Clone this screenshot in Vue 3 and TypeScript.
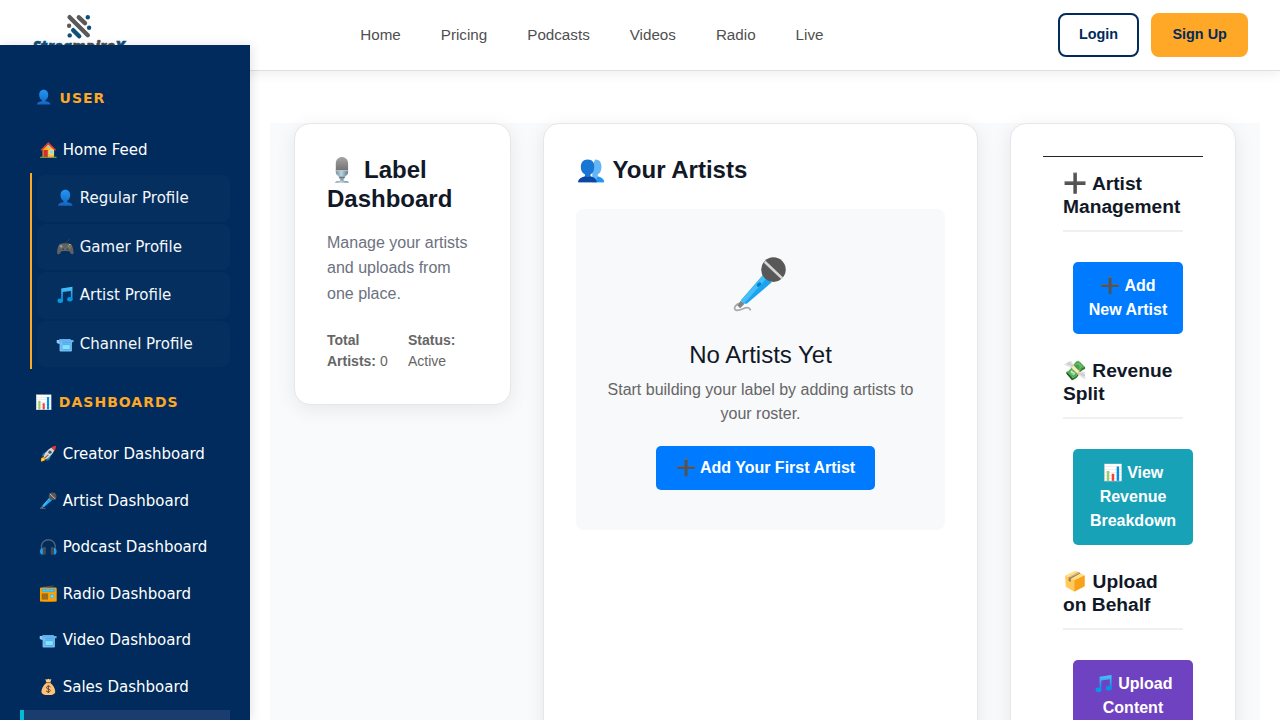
<script setup lang="ts">
interface Entry {
  icon: string
  text: string
}
interface Action {
  titleIcon: string
  title: string
  icon: string
  label: string
  kind: string
}

const nav: string[] = ['Home', 'Pricing', 'Podcasts', 'Videos', 'Radio', 'Live']
const profiles: Entry[] = [
  { icon: 'bust', text: 'Regular Profile' },
  { icon: 'game', text: 'Gamer Profile' },
  { icon: 'note', text: 'Artist Profile' },
  { icon: 'video', text: 'Channel Profile' },
]
const dashboards: Entry[] = [
  { icon: 'rocket', text: 'Creator Dashboard' },
  { icon: 'mic', text: 'Artist Dashboard' },
  { icon: 'phones', text: 'Podcast Dashboard' },
  { icon: 'radio', text: 'Radio Dashboard' },
  { icon: 'video', text: 'Video Dashboard' },
  { icon: 'bag', text: 'Sales Dashboard' },
]
const actions: Action[] = [
  { titleIcon: 'plus', title: 'Artist Management', icon: 'plus', label: 'Add New Artist', kind: 'primary' },
  { titleIcon: '', title: '💸 Revenue Split', icon: '', label: '📊 View Revenue Breakdown', kind: 'info' },
  { titleIcon: 'box', title: 'Upload on Behalf', icon: 'note', label: 'Upload Content', kind: 'purple' },
]
</script>

<template>
  <div class="page">
    <svg class="defs" width="0" height="0" aria-hidden="true">
      <defs>
        <linearGradient id="g-blue" x1="0" y1="0" x2="0" y2="1">
          <stop offset="0" stop-color="#4fc3f7" />
          <stop offset="1" stop-color="#0288e8" />
        </linearGradient>
        <linearGradient id="g-bust" x1="0" y1="0" x2="0" y2="1">
          <stop offset="0" stop-color="#2196f3" />
          <stop offset="1" stop-color="#1565c0" />
        </linearGradient>
        <linearGradient id="g-grey" x1="0" y1="0" x2="0" y2="1">
          <stop offset="0" stop-color="#a6a6a6" />
          <stop offset="1" stop-color="#707070" />
        </linearGradient>
        <linearGradient id="g-steel" x1="0" y1="0" x2="1" y2="0">
          <stop offset="0" stop-color="#78909c" />
          <stop offset="0.45" stop-color="#b9d3df" />
          <stop offset="1" stop-color="#607d8b" />
        </linearGradient>
      </defs>
      <symbol id="i-bust" viewBox="0 0 128 128">
        <path d="M64 6 C88 6 100 24 99 48 C98 68 88 82 78 86 V96 C96 99 114 102 117 122 H11 C14 102 32 99 50 96 V86 C40 82 30 68 29 48 C28 24 40 6 64 6Z" fill="url(#g-bust)" />
      </symbol>
      <symbol id="i-group" viewBox="0 0 128 128">
        <path d="M84 16 C104 16 112 30 112 50 C112 68 104 80 95 84 V94 C110 98 122 102 124 120 H70 V40Z" fill="#64b5f6" />
        <path d="M95 94 C110 98 122 102 124 120 H84Z" fill="#2196f3" />
        <path d="M49 16 C72 16 80 32 79 52 C78 70 70 80 62 84 V94 C78 98 88 102 90 120 H6 C8 102 22 98 37 94 V84 C28 80 18 70 18 50 C18 30 28 16 49 16Z" fill="#1976d2" />
        <path d="M37 92 Q49 99 62 94 C78 98 88 102 90 120 H6 C8 102 22 98 37 94Z" fill="#0d47a1" />
      </symbol>
      <symbol id="i-plus" viewBox="0 0 128 128">
        <path d="M55 4 H75 V54 H124 V74 H75 V124 H55 V74 H5 V54 H55Z" fill="#535353" />
        <path d="M55 4 H75 V10 H55Z M5 54 H55 V58 H5Z M75 54 H124 V58 H75Z" fill="#7a7a7a" />
      </symbol>
      <symbol id="i-box" viewBox="0 0 128 128">
        <path d="M8 32 L68 4 L120 30 L60 60Z" fill="#ffe082" />
        <path d="M8 32 L60 58 V124 L12 96Z" fill="#ffca55" />
        <path d="M60 58 L120 30 V92 L60 124Z" fill="#f9a11b" />
        <path d="M28 42 L84 12 L96 18 L40 50 V68 L28 62Z" fill="#a1795c" />
        <path d="M32 42 L88 15" stroke="#ffe9a8" stroke-width="4" />
      </symbol>
      <symbol id="i-home" viewBox="0 0 128 128">
        <path d="M22 62 L64 22 L106 62 V118 H22Z" fill="#fbc02d" />
        <path d="M12 66 L40 34 L60 52 L48 66Z" fill="#ffb300" />
        <path d="M6 66 L64 8 L122 66 L112 72 L64 26 L18 72Z" fill="#e53935" />
        <path d="M28 66 H60 V118 H28Z" fill="#d32f2f" />
        <path d="M74 66 H100 V96 H74Z" fill="#81d4fa" stroke="#fff3c4" stroke-width="4" />
        <circle cx="64" cy="42" r="10" fill="#81d4fa" />
        <path d="M4 114 H60 V124 H4Z M96 114 H124 V124 H96Z" fill="#689f38" />
        <path d="M60 114 H96 V124 H60Z" fill="#a1887f" />
      </symbol>
      <symbol id="i-game" viewBox="0 0 128 128">
        <path d="M64 42 C64 22 84 32 96 6" fill="none" stroke="#4a4a4a" stroke-width="5" />
        <path d="M24 44 C38 36 90 36 104 44 C116 52 126 92 124 108 C122 124 108 122 100 108 L90 94 H38 L28 108 C20 122 6 124 4 108 C2 92 12 52 24 44Z" fill="#616161" />
        <path d="M22 60 H44 M33 50 V71" stroke="#aaa" stroke-width="7" />
        <circle cx="48" cy="82" r="11" fill="#454545" stroke="#909090" stroke-width="3" />
        <circle cx="80" cy="82" r="11" fill="#454545" stroke="#909090" stroke-width="3" />
        <circle cx="96" cy="49" r="6" fill="#ffca28" />
        <circle cx="85" cy="60" r="6" fill="#29b6f6" />
        <circle cx="108" cy="61" r="6" fill="#f44336" />
        <circle cx="97" cy="72" r="6" fill="#4caf50" />
      </symbol>
      <symbol id="i-note" viewBox="0 0 128 128">
        <path d="M34 18 L116 6 V98 H104 V36 L46 44 V108 H34Z" fill="url(#g-blue)" />
        <ellipse cx="27" cy="108" rx="20" ry="16" fill="#039be5" />
        <ellipse cx="97" cy="97" rx="20" ry="16" fill="#0394e3" />
      </symbol>
      <symbol id="i-video" viewBox="0 0 128 128">
        <path d="M2 36 H20 V30 H104 V36 H124 V52 H108 V66 H20 L2 58Z" fill="#5eaeea" />
        <path d="M2 36 H20 V62 L2 58Z" fill="#90caf9" />
        <path d="M22 50 L42 42 H112 V114 Q112 120 106 120 H28 Q22 120 22 114Z" fill="#74bdf5" />
        <path d="M42 48 H106 V62 H42Z" fill="#5ba9e8" />
        <rect x="40" y="70" width="60" height="36" rx="8" fill="#81e4ff" stroke="#429ee4" stroke-width="5" />
      </symbol>
      <symbol id="i-rocket" viewBox="0 0 128 128">
        <path d="M34 84 L10 96 L10 122 L36 114 L48 96Z" fill="#ff9800" />
        <path d="M22 94 L12 118 L36 106Z" fill="#ffeb3b" />
        <path d="M52 48 L26 62 L16 84 L44 76Z M82 80 L72 106 L48 116 L54 86Z" fill="#1687a5" />
        <path d="M30 88 C36 52 70 18 112 12 C112 50 78 88 44 104Z" fill="#cfd8dc" />
        <path d="M84 20 Q100 8 120 6 Q120 26 110 44Z" fill="#e53935" />
        <circle cx="76" cy="52" r="12" fill="#455a64" />
        <path d="M36 96 L64 72" stroke="#d84315" stroke-width="8" />
      </symbol>
      <symbol id="i-mic" viewBox="0 0 128 128">
        <path d="M16 108 C2 116 4 127 18 123 C30 119 38 113 43 124" fill="none" stroke="#aaa" stroke-width="4" />
        <path d="M20 102 L29 109 L19 119 L13 113Z" fill="#828282" />
        <path d="M72 42 L91 60 L34 109 Q25 110 21 101Z" fill="#18a4f2" />
        <path d="M72 42 L80 50 L28 108 Q22 105 21 101Z" fill="#45bdf7" />
        <ellipse cx="62" cy="65" rx="6" ry="4" transform="rotate(-42 62 65)" fill="#087dca" />
        <circle cx="95" cy="31" r="28" fill="#585858" />
        <path d="M75 13 L115 51" stroke="#d6d6d6" stroke-width="6" />
      </symbol>
      <symbol id="i-phones" viewBox="0 0 128 128">
        <path d="M14 78 V64 C14 -4 114 -4 114 64 V78" fill="none" stroke="#455a64" stroke-width="9" />
        <path d="M12 66 C12 -6 116 -6 116 66" fill="none" stroke="#78909c" stroke-width="3" />
        <path d="M24 72 C2 68 -4 112 14 120 H26Z M104 72 C126 68 132 112 114 120 H102Z" fill="#1e9cf0" />
        <rect x="24" y="66" width="22" height="56" rx="8" fill="#4a4a4a" />
        <rect x="82" y="66" width="22" height="56" rx="8" fill="#4a4a4a" />
      </symbol>
      <symbol id="i-radio" viewBox="0 0 128 128">
        <path d="M24 18 L104 6" stroke="#666" stroke-width="5" />
        <rect x="3" y="18" width="122" height="104" rx="9" fill="#ffa000" />
        <rect x="16" y="28" width="96" height="22" fill="#29b6f6" />
        <path d="M24 38 H104" stroke="#a8e5ff" stroke-width="5" stroke-dasharray="6 4" />
        <rect x="16" y="62" width="46" height="44" fill="#8d6420" />
        <path d="M27 62 V106 M41 62 V106 M55 62 V106" stroke="#b98524" stroke-width="4" />
        <circle cx="92" cy="82" r="17" fill="#4dc0e8" />
        <circle cx="92" cy="82" r="6" fill="#ffe082" />
        <path d="M10 122 H28 M100 122 H118" stroke="#8d6e30" stroke-width="7" />
      </symbol>
      <symbol id="i-bag" viewBox="0 0 128 128">
        <path d="M42 8 Q54 14 64 6 Q74 14 86 8 L78 34 H50Z" fill="#ffcc80" />
        <path d="M50 34 H78 C100 52 114 78 114 98 C114 118 96 124 64 124 C32 124 14 118 14 98 C14 78 28 52 50 34Z" fill="#fdc378" />
        <path d="M47 34 H81" stroke="#8d6540" stroke-width="7" />
        <path d="M80 66 C68 54 48 60 51 72 C54 84 79 78 78 92 C77 104 56 105 47 94 M64 53 V110" fill="none" stroke="#5d4037" stroke-width="7" />
      </symbol>
      <symbol id="i-studio" viewBox="0 0 128 128">
        <path d="M36 34 C36 -6 92 -6 92 34 V68 H36Z" fill="url(#g-grey)" />
        <path d="M36 66 H92 V74 C92 86 80 92 74 94 H54 C48 92 36 86 36 74Z" fill="url(#g-steel)" />
        <path d="M36 67 H92" stroke="#d8e8ee" stroke-width="3" />
        <path d="M48 94 H80 L74 104 H54Z" fill="#607d8b" />
        <path d="M56 104 H72 V114 H56Z" fill="#90a4ae" />
        <path d="M32 122 Q34 114 56 113 H72 Q94 114 96 122Z" fill="url(#g-steel)" />
      </symbol>
    </svg>

    <header class="topbar">
      <svg class="logo" width="104" height="50" viewBox="0 0 104 50" role="img" aria-label="StreampireX">
        <g stroke-width="4.4" stroke-linecap="round" fill="none">
          <path d="M41.6 9.2 L59.8 27.2" stroke="#5a5a5a" />
          <path d="M50.8 9.3 L57 15.2" stroke="#5a5a5a" />
          <path d="M45.2 22.2 L51.2 28.3" stroke="#0f4f7c" />
        </g>
        <circle cx="59.8" cy="9.2" r="2.2" fill="#0f4f7c" />
        <circle cx="61.1" cy="19.7" r="2.2" fill="#0f4f7c" />
        <circle cx="41.1" cy="17.8" r="2.2" fill="#5a5a5a" />
        <circle cx="41.7" cy="27.4" r="2.2" fill="#0f4f7c" />
        <text x="4.4" y="43.6" textLength="92.6" lengthAdjust="spacingAndGlyphs" class="wordmark"><tspan class="navy">Strea</tspan><tspan class="grey">mpire</tspan><tspan class="navy">X</tspan></text>
      </svg>
      <nav class="nav">
        <a v-for="item in nav" :key="item">{{ item }}</a>
      </nav>
      <div class="auth">
        <button class="btn-login">Login</button>
        <button class="btn-signup">Sign Up</button>
      </div>
    </header>

    <aside class="sidebar">
      <h3 class="group"><svg class="ico"><use href="#i-bust" /></svg> USER</h3>
      <a class="item"><svg class="ico"><use href="#i-home" /></svg> Home Feed</a>
      <div class="profiles">
        <a v-for="p in profiles" :key="p.text" class="item sub">
          <svg class="ico"><use :href="'#i-' + p.icon" /></svg> {{ p.text }}
        </a>
      </div>
      <h3 class="group second">📊 DASHBOARDS</h3>
      <a v-for="d in dashboards" :key="d.text" class="item">
        <svg class="ico"><use :href="'#i-' + d.icon" /></svg> {{ d.text }}
      </a>
      <a class="item active"></a>
    </aside>

    <main class="content">
      <section class="card">
        <h1><svg class="ico"><use href="#i-studio" /></svg> Label Dashboard</h1>
        <p class="lead">Manage your artists and uploads from one place.</p>
        <div class="stats">
          <span><strong>Total Artists:</strong> 0</span>
          <span><strong>Status:</strong> Active</span>
        </div>
      </section>

      <section class="card tall">
        <h2><svg class="ico"><use href="#i-group" /></svg> Your Artists</h2>
        <div class="empty">
          <div class="mic"><svg class="ico"><use href="#i-mic" /></svg></div>
          <h3>No Artists Yet</h3>
          <p>Start building your label by adding artists to your roster.</p>
          <button class="btn primary"><svg class="ico"><use href="#i-plus" /></svg> Add Your First Artist</button>
        </div>
      </section>

      <section class="card tall">
        <div class="actions">
          <div v-for="a in actions" :key="a.title" class="action">
            <h3><svg v-if="a.titleIcon" class="ico"><use :href="'#i-' + a.titleIcon" /></svg> {{ a.title }}</h3>
            <button class="btn" :class="a.kind">
              <svg v-if="a.icon" class="ico"><use :href="'#i-' + a.icon" /></svg> {{ a.label }}
            </button>
          </div>
        </div>
      </section>
    </main>
  </div>
</template>

<style>
html,
body {
  margin: 0;
  overflow: hidden;
  background: #fff;
}
</style>

<style scoped>
* {
  box-sizing: border-box;
}
.page {
  height: 720px;
  overflow: hidden;
  position: relative;
  font-family: "Liberation Sans", Arial, sans-serif;
  color: #111827;
}
.defs {
  position: absolute;
}
.ico {
  width: 1.245em;
  height: 1.17em;
  vertical-align: -0.04em;
  margin: -0.2em 0.02em -0.2em 0;
}
h1, h2, h3, p {
  margin: 0;
}
button {
  font-family: inherit;
  border: 0;
}
.topbar {
  position: relative;
  z-index: 2;
  height: 71px;
  display: flex;
  align-items: center;
  padding: 0 32px 0 28px;
  background: #fff;
  border-bottom: 1px solid #dcdfe4;
  box-shadow: 0 2px 12px rgba(0, 0, 0, 0.08);
}
.logo {
  flex: none;
  align-self: flex-start;
  margin-top: 8px;
}
.wordmark {
  font: italic 800 16px "Open Sans", "Noto Sans", sans-serif;
  stroke-width: 0.5px;
}
.navy {
  fill: #0f4f7c;
  stroke: #0f4f7c;
}
.grey {
  fill: #4a4a4a;
  stroke: #4a4a4a;
}
.nav {
  display: flex;
  gap: 40px;
  margin-left: 228.3px;
  padding-bottom: 2px;
  font-size: 15.2px;
  color: #4f4f4f;
}
.auth {
  display: flex;
  gap: 12px;
  margin-left: auto;
}
.auth button {
  height: 44px;
  padding: 0 19.2px 2px;
  border: 2px solid #002b5c;
  border-radius: 8px;
  background: #fff;
  color: #002b5c;
  font-size: 14.4px;
  font-weight: 700;
}
.auth .btn-signup {
  background: #ffa726;
  border-color: #ffa726;
}
.sidebar {
  position: absolute;
  z-index: 3;
  left: 0;
  top: 45px;
  bottom: 0;
  width: 250px;
  padding: 20px;
  overflow: hidden;
  background: #002b5c;
  box-shadow: 2px 0 10px rgba(0, 0, 0, 0.1);
  font-family: "DejaVu Sans", sans-serif;
}
.group {
  padding: 22.5px 15px 18px;
  font-size: 14px;
  line-height: 21px;
  letter-spacing: 1px;
  color: #ffa726;
}
.group .ico {
  margin-right: 1.3px;
}
.group.second {
  padding-bottom: 18.5px;
}
.item {
  display: block;
  height: 46.5px;
  padding: 12px 15px;
  border-left: 4px solid transparent;
  font-size: 15px;
  line-height: 22.5px;
  white-space: nowrap;
  color: #fff;
}
.item.active {
  background: #1b3c6e;
  border-left-color: #00bcd4;
}
.profiles {
  display: flex;
  flex-direction: column;
  gap: 2px;
  margin-left: 10px;
  padding: 2px 0 2px 5px;
  border-left: 2px solid #ffa726;
}
.item.sub {
  color: #f4f7fa;
  background: rgba(255, 255, 255, 0.02);
  border-radius: 8px;
}
.content {
  display: grid;
  grid-template-columns: 217px 435px 226px;
  gap: 32px;
  align-items: start;
  margin: 52px 20px 0 270px;
  padding: 0 24px;
  background: #f9fafc;
}
.card {
  padding: 32px;
  background: #fff;
  border: 1px solid #e5e7eb;
  border-radius: 16px;
  box-shadow: 0 4px 20px rgba(0, 0, 0, 0.08);
}
.tall {
  height: 900px;
}
h1, h2 {
  font-size: 24px;
  line-height: 28.8px;
}
.lead {
  margin-top: 16px;
  font-size: 16px;
  line-height: 25.6px;
  color: #6b7280;
}
.stats {
  display: flex;
  gap: 20px;
  margin-top: 23.6px;
  font-size: 14px;
  line-height: 21px;
  color: #666;
}
.stats span:first-child {
  width: 61px;
}
.stats span:last-child {
  width: 50px;
}
.empty {
  height: 321px;
  margin-top: 24.2px;
  padding: 40px 24px;
  display: flex;
  flex-direction: column;
  align-items: center;
  text-align: center;
  border-radius: 8px;
  background: #f8f9fb;
}
.mic {
  height: 72px;
  font-size: 48px;
  line-height: 72px;
}
.empty h3 {
  margin-top: 20px;
  font-size: 24px;
  font-weight: 400;
  line-height: 28.8px;
}
.empty p {
  margin: 8.2px 0 20px;
  font-size: 16px;
  line-height: 24px;
  color: #666;
}
.btn {
  padding: 12px 15px;
  border-radius: 5px;
  color: #fff;
  font-size: 16px;
  font-weight: 700;
  line-height: 24px;
}
.empty .btn {
  margin-left: 10px;
  padding: 10px 20px;
}
.primary {
  background: #007bff;
}
.info {
  background: #17a2b8;
}
.purple {
  background: #6f42c1;
}
.actions {
  display: flex;
  flex-direction: column;
  gap: 25px;
  padding: 15px 20px;
  border-top: 1px solid #222;
}
.action h3 {
  padding-bottom: 12px;
  border-bottom: 2px solid #f0f0f0;
  font-size: 19.2px;
  line-height: 23px;
}
.action .btn {
  display: block;
  width: 120px;
  margin: 30px 0 0 10px;
}
.action .primary {
  width: 110px;
}
</style>
